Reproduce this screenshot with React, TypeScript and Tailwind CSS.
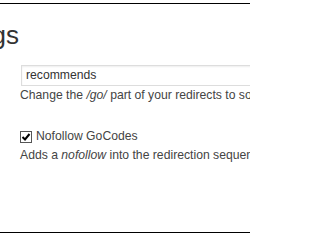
export default function App() {
  return (
    <div className="w-[250px] h-[238px] overflow-hidden bg-white text-[#444] font-['Liberation_Sans',Arial,sans-serif]">
      <div className="h-[3px]" />
      <div className="border-t border-black" />

      {/* Page title, cut off on the left */}
      <h1 className="mt-[16px] ml-[-75px] text-[26px] leading-[30px] font-normal text-[#333] whitespace-nowrap">
        Settings
      </h1>

      <div className="pl-[20px]">
        {/* Slug field */}
        <div className="mt-[15px] ml-[1px] w-[320px] h-[21px] border border-[#ddd] flex items-center pl-[4px] text-[12.2px] text-[#333] shadow-[inset_0_1px_2px_rgba(0,0,0,0.07)]">
          recommends
        </div>
        <p className="mt-[2px] text-[12.2px] leading-[15px] whitespace-nowrap">
          Change the <em>/go/</em> part of your redirects to something else
        </p>

        {/* Nofollow option */}
        <label className="mt-[26px] flex items-center gap-[4px] text-[12.2px] leading-[15px] whitespace-nowrap">
          <svg width="12" height="12" viewBox="0 0 12 12" className="shrink-0">
            <rect x="0.5" y="0.5" width="11" height="11" fill="#fff" stroke="#555" />
            <path d="M2.5 6 L5 8.5 L9.5 3" fill="none" stroke="#000" strokeWidth="2" />
          </svg>
          Nofollow GoCodes
        </label>
        <p className="mt-[4px] text-[12.2px] leading-[15px] whitespace-nowrap">
          Adds a <em>nofollow</em> into the redirection sequence
        </p>
      </div>

      <div className="mt-[69px] border-t border-black" />
    </div>
  );
}
